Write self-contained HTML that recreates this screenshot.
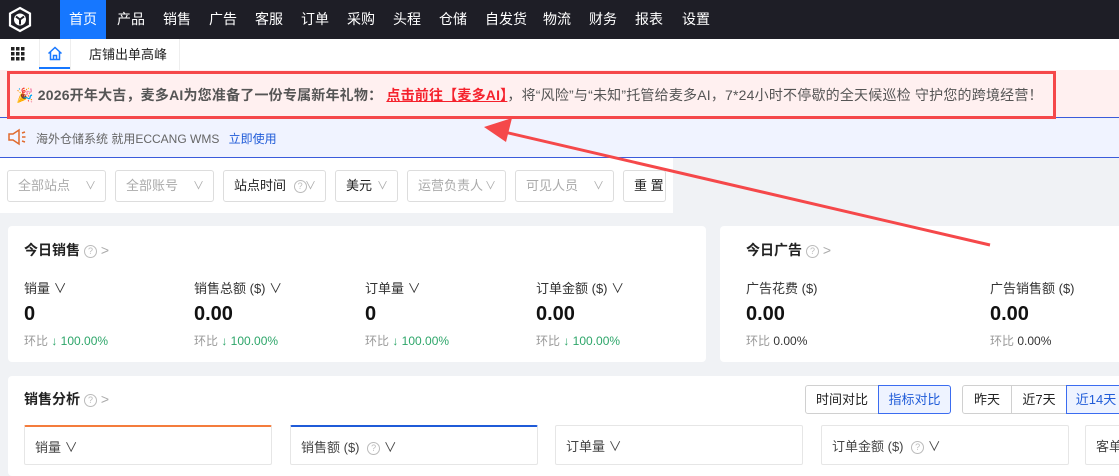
<!DOCTYPE html>
<html><head><meta charset="utf-8"><style>
*{box-sizing:border-box;margin:0;padding:0}
body{width:1119px;height:461px;overflow:hidden;background:#f0f2f5;font-family:"Liberation Sans","Noto Sans CJK SC",sans-serif;font-size:13px;color:#333;position:relative}
.abs{position:absolute}
.nav{left:0;top:0;width:1119px;height:39px;background:#1e1e26}
.nav span{position:absolute;top:0;height:39px;line-height:39px;color:#fff;font-size:14px}
.tabs{left:0;top:39px;width:1119px;height:31px;background:#fff}
.banner{left:0;top:70px;width:1119px;height:48px;background:#fff0f0;border-bottom:1px solid #3b5bdb}
.rbox{left:7px;top:71px;width:1049px;height:48px;border:3px solid #f5484a}
.wms{left:0;top:119px;width:1119px;height:39px;background:#f0f3ff;border-bottom:1px solid #3b5bdb}
.filters{left:0;top:158px;width:673px;height:55px;background:#fff}
.sel{position:absolute;top:12px;height:32px;border:1px solid #ddd;border-radius:3px;line-height:30px;padding-left:10px;color:#aaa;font-size:13px;white-space:nowrap}
.sel i{position:absolute;right:9px;top:0;font-style:normal;color:#aaa;font-size:11px}
.card{background:#fff;border-radius:4px}
.t{font-weight:bold;font-size:14px;color:#222;white-space:nowrap}
.q{display:inline-block;width:13px;height:13px;border:1px solid #bbb;border-radius:50%;font-size:9px;line-height:11px;text-align:center;color:#bbb;font-weight:normal;vertical-align:1px;margin-left:4px}
.lbl{font-size:13px;color:#333}
.big{font-size:20px;font-weight:bold;color:#111}
.cmp{font-size:12px;color:#999}
.cmp b{color:#2ea66a;font-weight:normal}
.sub{position:absolute;top:425px;height:40px;border:1px solid #e6e6e6;border-radius:2px;background:#fff;padding:10px 10px;font-size:13px;color:#444}
.btn{position:absolute;top:385px;height:29px;line-height:27px;border:1px solid #d0d0d0;text-align:center;font-size:13px;color:#222;background:#fff}
</style></head><body>
<div class="abs nav">
<svg class="abs" style="left:7px;top:6px" width="26" height="27" viewBox="0 0 26 27"><path d="M13 2 L23 7.5 V19.5 L13 25 L3 19.5 V7.5Z" fill="none" stroke="#fff" stroke-width="2.2"/><circle cx="13" cy="13.5" r="6" fill="#fff"/><path d="M13 13.5 L9 10.5 M13 13.5 L17 10.5 M13 13.5 V18.5" stroke="#1e1e26" stroke-width="2"/></svg>
<span style="left:60px;width:46px;background:#1677ff;text-align:center">首页</span>
<span style="left:117px">产品</span><span style="left:163px">销售</span><span style="left:209px">广告</span><span style="left:255px">客服</span><span style="left:301px">订单</span><span style="left:347px">采购</span><span style="left:393px">头程</span><span style="left:439px">仓储</span><span style="left:485px">自发货</span><span style="left:543px">物流</span><span style="left:589px">财务</span><span style="left:635px">报表</span><span style="left:682px">设置</span>
</div>
<div class="abs tabs">
<svg class="abs" style="left:11px;top:8px" width="14" height="14"><g fill="#222"><rect x="0" y="0" width="3.5" height="3.5"/><rect x="5" y="0" width="3.5" height="3.5"/><rect x="10" y="0" width="3.5" height="3.5"/><rect x="0" y="5" width="3.5" height="3.5"/><rect x="5" y="5" width="3.5" height="3.5"/><rect x="10" y="5" width="3.5" height="3.5"/><rect x="0" y="10" width="3.5" height="3.5"/><rect x="5" y="10" width="3.5" height="3.5"/><rect x="10" y="10" width="3.5" height="3.5"/></g></svg>
<div class="abs" style="left:39px;top:0;width:1px;height:31px;background:#eee"></div>
<div class="abs" style="left:39px;top:28px;width:31px;height:2px;background:#1677ff"></div>
<svg class="abs" style="left:47px;top:7px" width="16" height="15" viewBox="0 0 16 15"><path d="M1.5 7.5 L8 1.5 L14.5 7.5 M3.5 6 V13.5 H12.5 V6 M6.5 13.5 V9.5 H9.5 V13.5" fill="none" stroke="#1677ff" stroke-width="1.5"/></svg>
<div class="abs" style="left:70px;top:0;width:1px;height:31px;background:#eee"></div>
<div class="abs" style="left:89px;top:0;line-height:31px;font-size:13px;color:#222">店铺出单高峰</div>
<div class="abs" style="left:179px;top:0;width:1px;height:31px;background:#eee"></div>
</div>
<div class="abs banner"></div>
<div class="abs" style="left:16px;top:83px;font-size:14px;white-space:nowrap;color:#555;line-height:24px;letter-spacing:0.2px"><span style="color:#d4a017">🎉</span> <b style="color:#555">2026开年大吉，麦多AI为您准备了一份专属新年礼物：</b> <b style="color:#f5222d;text-decoration:underline">点击前往【麦多AI】</b>，将“风险”与“未知”托管给麦多AI，7*24小时不停歇的全天候巡检 守护您的跨境经营！</div>
<div class="abs rbox"></div>
<div class="abs wms"></div>
<svg class="abs" style="left:7px;top:128px" width="20" height="18" viewBox="0 0 20 18"><path d="M2 6 H6 L12 2 V16 L6 12 H2Z" fill="none" stroke="#e06b2e" stroke-width="1.5"/><path d="M15 5 L18 4 M15 9 H18.5 M15 13 L18 14" stroke="#e06b2e" stroke-width="1.5"/></svg>
<div class="abs" style="left:36px;top:130px;font-size:12px;color:#666">海外仓储系统 就用ECCANG WMS <span style="color:#1f5bd8;margin-left:6px">立即使用</span></div>
<div class="abs filters">
<div class="sel" style="left:7px;width:99px">全部站点<i>∨</i></div>
<div class="sel" style="left:115px;width:99px">全部账号<i>∨</i></div>
<div class="sel" style="left:223px;width:103px;color:#222">站点时间 <span class="q">?</span><i>∨</i></div>
<div class="sel" style="left:335px;width:63px;color:#222">美元<i>∨</i></div>
<div class="sel" style="left:407px;width:99px">运营负责人<i>∨</i></div>
<div class="sel" style="left:515px;width:99px">可见人员<i>∨</i></div>
<div class="sel" style="left:623px;width:43px;color:#222">重 置</div>
</div>
<div class="abs card" style="left:8px;top:226px;width:698px;height:136px">
<div class="abs t" style="left:16px;top:14px">今日销售<span class="q">?</span> <span style="color:#aaa;font-weight:normal">&gt;</span></div>
<div class="abs" style="left:16px;top:52px"><div class="lbl">销量 ∨</div><div class="big" style="margin-top:6px">0</div><div class="cmp" style="margin-top:6px">环比 <b>↓ 100.00%</b></div></div>
<div class="abs" style="left:186px;top:52px"><div class="lbl">销售总额 ($) ∨</div><div class="big" style="margin-top:6px">0.00</div><div class="cmp" style="margin-top:6px">环比 <b>↓ 100.00%</b></div></div>
<div class="abs" style="left:357px;top:52px"><div class="lbl">订单量 ∨</div><div class="big" style="margin-top:6px">0</div><div class="cmp" style="margin-top:6px">环比 <b>↓ 100.00%</b></div></div>
<div class="abs" style="left:528px;top:52px"><div class="lbl">订单金额 ($) ∨</div><div class="big" style="margin-top:6px">0.00</div><div class="cmp" style="margin-top:6px">环比 <b>↓ 100.00%</b></div></div>
</div>
<div class="abs card" style="left:720px;top:226px;width:420px;height:136px">
<div class="abs t" style="left:26px;top:14px">今日广告<span class="q">?</span> <span style="color:#aaa;font-weight:normal">&gt;</span></div>
<div class="abs" style="left:26px;top:52px"><div class="lbl">广告花费 ($)</div><div class="big" style="margin-top:6px">0.00</div><div class="cmp" style="margin-top:6px">环比 <span style="color:#333">0.00%</span></div></div>
<div class="abs" style="left:270px;top:52px"><div class="lbl">广告销售额 ($)</div><div class="big" style="margin-top:6px">0.00</div><div class="cmp" style="margin-top:6px">环比 <span style="color:#333">0.00%</span></div></div>
</div>
<div class="abs card" style="left:8px;top:376px;width:1130px;height:100px"></div>
<div class="abs t" style="left:24px;top:389px">销售分析<span class="q">?</span> <span style="color:#aaa;font-weight:normal">&gt;</span></div>
<div class="btn" style="left:805px;width:74px;border-radius:3px 0 0 3px">时间对比</div>
<div class="btn" style="left:878px;width:73px;border-color:#3b6cf0;color:#1f5bd8;background:#eef3ff;border-radius:0 3px 3px 0">指标对比</div>
<div class="btn" style="left:962px;width:50px;border-radius:3px 0 0 3px">昨天</div>
<div class="btn" style="left:1011px;width:56px">近7天</div>
<div class="btn" style="left:1066px;width:60px;border-color:#3b6cf0;color:#1f5bd8;background:#eef3ff">近14天</div>
<div class="sub" style="left:24px;width:248px;border-top:2px solid #f47c3c">销量 ∨</div>
<div class="sub" style="left:290px;width:248px;border-top:2px solid #1f5bd8">销售额 ($) <span class="q">?</span> ∨</div>
<div class="sub" style="left:555px;width:248px">订单量 ∨</div>
<div class="sub" style="left:821px;width:248px">订单金额 ($) <span class="q">?</span> ∨</div>
<div class="sub" style="left:1085px;width:60px">客单</div>
<svg class="abs" style="left:0;top:0" width="1119" height="461"><line x1="990" y1="245" x2="500" y2="131" stroke="#f5484a" stroke-width="3"/><path d="M484 127 L512 118 L506 142Z" fill="#f5484a"/></svg>
</body></html>
